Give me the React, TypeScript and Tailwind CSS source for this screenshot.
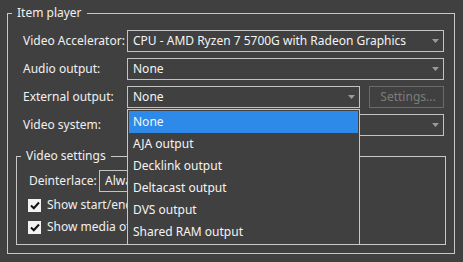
import { useState } from "react";

const font = { fontFamily: '"Noto Sans", "Open Sans", sans-serif' };

function Arrow() {
  return (
    <svg width="7" height="4" viewBox="0 0 7 4" className="shrink-0">
      <path d="M0 0 H7 L3.5 4 Z" fill="#9a9a9a" />
    </svg>
  );
}

function Combo({ value, width }: { value: string; width: string }) {
  return (
    <div
      className={`flex h-[22px] items-center justify-between border border-[#c3c3c3] pl-[5px] pr-[4px] text-[#f4f4f4] ${width}`}
    >
      <span className="overflow-hidden whitespace-nowrap leading-[18px]">{value}</span>
      <Arrow />
    </div>
  );
}

function Check({ label }: { label: string }) {
  return (
    <div className="flex h-[22px] items-center pl-[11px]">
      <div className="flex h-[13px] w-[13px] shrink-0 items-center justify-center bg-[#f3f3f3]">
        <svg width="10" height="9" viewBox="0 0 10 9">
          <path d="M1 4.5 L3.8 7.2 L9 1.5" stroke="#111" strokeWidth="2" fill="none" />
        </svg>
      </div>
      <span className="ml-[6px] whitespace-nowrap">{label}</span>
    </div>
  );
}

const outputs = [
  "None",
  "AJA output",
  "Decklink output",
  "Deltacast output",
  "DVS output",
  "Shared RAM output",
];

export default function App() {
  const [selected, setSelected] = useState(0);

  return (
    <div
      className="relative h-[262px] w-[463px] overflow-hidden bg-[#404040] pt-[5px] text-[12px] text-[#f0f0f0]"
      style={font}
    >
      <fieldset className="ml-[7px] h-[249px] w-[448px] border border-[#c8c8c8]">
        <legend className="ml-[4px] px-[5px] leading-[16px]">Item player</legend>
        <div className="pl-[8px] pt-[9px]">
          <div className="flex flex-col gap-[6px] pl-[7px]">
            <div className="flex items-center">
              <span className="w-[104px]">Video Accelerator:</span>
              <Combo value="CPU - AMD Ryzen 7 5700G with Radeon Graphics" width="w-[317px]" />
            </div>
            <div className="flex items-center">
              <span className="w-[104px]">Audio output:</span>
              <Combo value="None" width="w-[317px]" />
            </div>
            <div className="flex items-center">
              <span className="w-[104px]">External output:</span>
              <Combo value="None" width="w-[233px]" />
              <button className="ml-[9px] h-[22px] w-[75px] border border-[#6a6a6a] pl-[3px] text-[#7c7c7c]">
                Settings...
              </button>
            </div>
            <div className="flex items-center">
              <span className="w-[104px]">Video system:</span>
              <Combo value="PAL" width="w-[317px]" />
            </div>
          </div>

          <fieldset className="mt-[12px] h-[97px] w-[430px] border border-[#c8c8c8]">
            <legend className="ml-[4px] px-[5px] leading-[16px]">Video settings</legend>
            <div className="pt-[6px]">
              <div className="flex items-center pl-[12px]">
                <span className="w-[70px]">Deinterlace:</span>
                <Combo value="Always" width="w-[200px]" />
              </div>
              <div className="mt-[2px]">
                <Check label="Show start/end markers" />
                <Check label="Show media offset" />
              </div>
            </div>
          </fieldset>
        </div>
      </fieldset>

      <div className="absolute left-[127px] top-[109px] w-[233px] border border-[#c8c8c8] bg-[#404040] p-[1px]">
        {outputs.map((o, i) => (
          <div
            key={o}
            onMouseEnter={() => setSelected(i)}
            className={`flex h-[22px] items-center pl-[4px] text-[#f4f4f4] ${
              i === selected ? "bg-[#2d8ae8]" : ""
            }`}
          >
            {o}
          </div>
        ))}
      </div>
    </div>
  );
}
